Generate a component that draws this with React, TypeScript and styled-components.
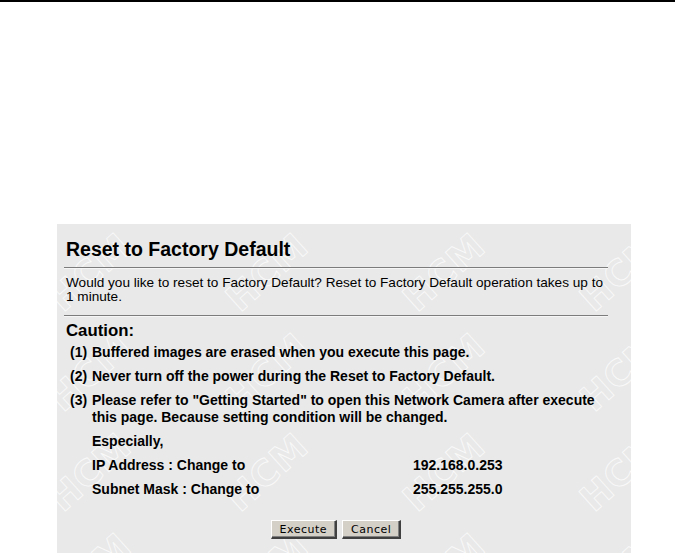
import React from "react";
import styled, { createGlobalStyle } from "styled-components";

const GlobalStyle = createGlobalStyle`
  html, body { margin: 0; padding: 0; background: #ffffff; }
  body { font-family: "Liberation Sans", Arial, sans-serif; color: #000; }
`;

const Page = styled.div`
  width: 675px;
  height: 553px;
  overflow: hidden;
  display: flex;
  flex-direction: column;
`;

const TopRule = styled.div`
  flex: none;
  height: 2px;
  background: #000;
`;

const Panel = styled.section`
  position: relative;
  overflow: hidden;
  flex: 1;
  box-sizing: border-box;
  width: 574px;
  margin: 222px 0 0 57px;
  padding: 14px 23px 0 7px;
  background: #e9e9e9;
`;

const WatermarkLayer = styled.svg`
  position: absolute;
  inset: 0;
  width: 100%;
  height: 100%;
  pointer-events: none;
  z-index: 0;
`;

const Mark = styled.text`
  font-family: "DejaVu Sans", sans-serif;
  font-weight: bold;
  font-size: 36px;
  letter-spacing: 1px;
  fill: none;
  stroke: #ffffff;
  stroke-width: 0.9;
  stroke-opacity: 0.75;
`;

const Content = styled.div`
  position: relative;
  z-index: 1;
  width: 544px;
  display: flex;
  flex-direction: column;
`;

const Title = styled.h1`
  margin: 0;
  padding-left: 2px;
  font-size: 19.5px;
  line-height: 22px;
  font-weight: bold;
`;

const Rule = styled.hr<{ $gap: number }>`
  margin: ${(p) => p.$gap}px 0 0;
  height: 0;
  border: 0;
  border-top: 1px solid #7c7c7c;
  border-bottom: 1px solid #f6f6f6;
`;

const Intro = styled.p`
  margin: 7px 0 0;
  padding: 0 2px;
  font-size: 13.6px;
  line-height: 14px;
`;

const Caution = styled.h2`
  margin: 4px 0 0;
  padding-left: 2px;
  font-size: 16.8px;
  line-height: 20px;
  font-weight: bold;
`;

const List = styled.ol`
  margin: 3px 0 0;
  padding: 0;
  list-style: none;
  display: flex;
  flex-direction: column;
  gap: 7px;
  font-size: 14px;
  line-height: 17px;
  font-weight: bold;
`;

const Item = styled.li`
  display: grid;
  grid-template-columns: 22px 1fr;
  padding-left: 6px;
`;

const Num = styled.span``;

const Body = styled.span``;

const Setting = styled.div`
  display: grid;
  grid-template-columns: 321px 1fr;
`;

const ButtonBar = styled.div`
  display: flex;
  justify-content: center;
  gap: 5px;
  margin-top: 22px;
`;

const Button = styled.button`
  box-sizing: border-box;
  height: 19px;
  padding: 0 8px;
  background: #d4d0c8;
  color: #000;
  font-family: "DejaVu Sans", sans-serif;
  font-size: 11px;
  letter-spacing: 0.5px;
  line-height: 15px;
  border-style: solid;
  border-width: 1px 2px 2px 1px;
  border-color: #ffffff #404040 #404040 #ffffff;
  box-shadow: inset -1px -1px 0 #808080;
  cursor: pointer;
`;

const marks: { x: number; y: number }[] = [];
for (let r = 0; r < 4; r++) {
  for (let c = 0; c < 4; c++) {
    marks.push({ x: 33 + c * 177, y: 48 + r * 100 });
  }
}

export default function App() {
  return (
    <Page>
      <GlobalStyle />
      <TopRule />
      <Panel>
        <WatermarkLayer aria-hidden="true">
          {marks.map((m, i) => (
            <Mark
              key={i}
              x={m.x}
              y={m.y}
              textAnchor="middle"
              dominantBaseline="central"
              transform={`rotate(-42 ${m.x} ${m.y})`}
            >
              HCM
            </Mark>
          ))}
        </WatermarkLayer>
        <Content>
          <Title>Reset to Factory Default</Title>
          <Rule $gap={7} />
          <Intro>
            Would you like to reset to Factory Default? Reset to Factory Default operation takes up to 1 minute.
          </Intro>
          <Rule $gap={11} />
          <Caution>Caution:</Caution>
          <List>
            <Item>
              <Num>(1)</Num>
              <Body>Buffered images are erased when you execute this page.</Body>
            </Item>
            <Item>
              <Num>(2)</Num>
              <Body>Never turn off the power during the Reset to Factory Default.</Body>
            </Item>
            <Item>
              <Num>(3)</Num>
              <Body>
                Please refer to "Getting Started" to open this Network Camera after execute this page. Because
                setting condition will be changed.
              </Body>
            </Item>
            <Item>
              <Num />
              <Body>Especially,</Body>
            </Item>
            <Item>
              <Num />
              <Setting>
                <span>IP Address : Change to</span>
                <span>192.168.0.253</span>
              </Setting>
            </Item>
            <Item>
              <Num />
              <Setting>
                <span>Subnet Mask : Change to</span>
                <span>255.255.255.0</span>
              </Setting>
            </Item>
          </List>
          <ButtonBar>
            <Button type="button">Execute</Button>
            <Button type="button">Cancel</Button>
          </ButtonBar>
        </Content>
      </Panel>
    </Page>
  );
}
